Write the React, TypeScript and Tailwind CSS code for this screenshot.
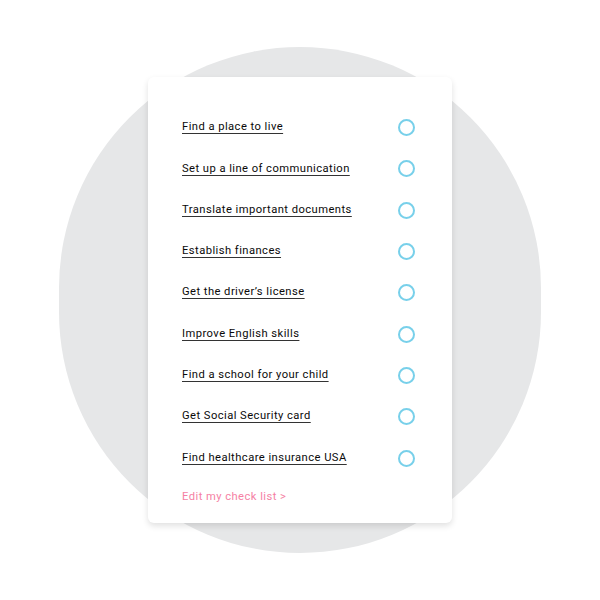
const items = [
  "Find a place to live",
  "Set up a line of communication",
  "Translate important documents",
  "Establish finances",
  "Get the driver\u2019s license",
  "Improve English skills",
  "Find a school for your child",
  "Get Social Security card",
  "Find healthcare insurance USA",
];

export default function App() {
  return (
    <div
      className="relative w-[600px] h-[600px] bg-white flex items-center justify-center overflow-hidden"
      style={{ fontFamily: "Roboto, 'Liberation Sans', sans-serif" }}
    >
      <div className="absolute left-[59px] top-[47px] w-[482px] h-[506px] rounded-full bg-[#e6e7e8]" />

      <div className="relative w-[304px] h-[446px] bg-white rounded-[6px] shadow-[0_3px_6px_rgba(0,0,0,0.12)] pt-[30px] pl-[34px] pr-[37px]">
        <ul className="flex flex-col">
          {items.map((item) => (
            <li key={item} className="h-[41.3px] flex items-center justify-between">
              <a className="text-[11.2px] tracking-[0.45px] text-[#0a0a0a] underline underline-offset-[3px] decoration-[1.3px] decoration-[#333]">
                {item}
              </a>
              <span className="w-[17px] h-[17px] rounded-full border-2 border-[#78d0ea]" />
            </li>
          ))}
        </ul>
        <p className="mt-[10px] text-[11.2px] tracking-[0.45px] text-[#f57fa4]">Edit my check list &gt;</p>
      </div>
    </div>
  );
}
